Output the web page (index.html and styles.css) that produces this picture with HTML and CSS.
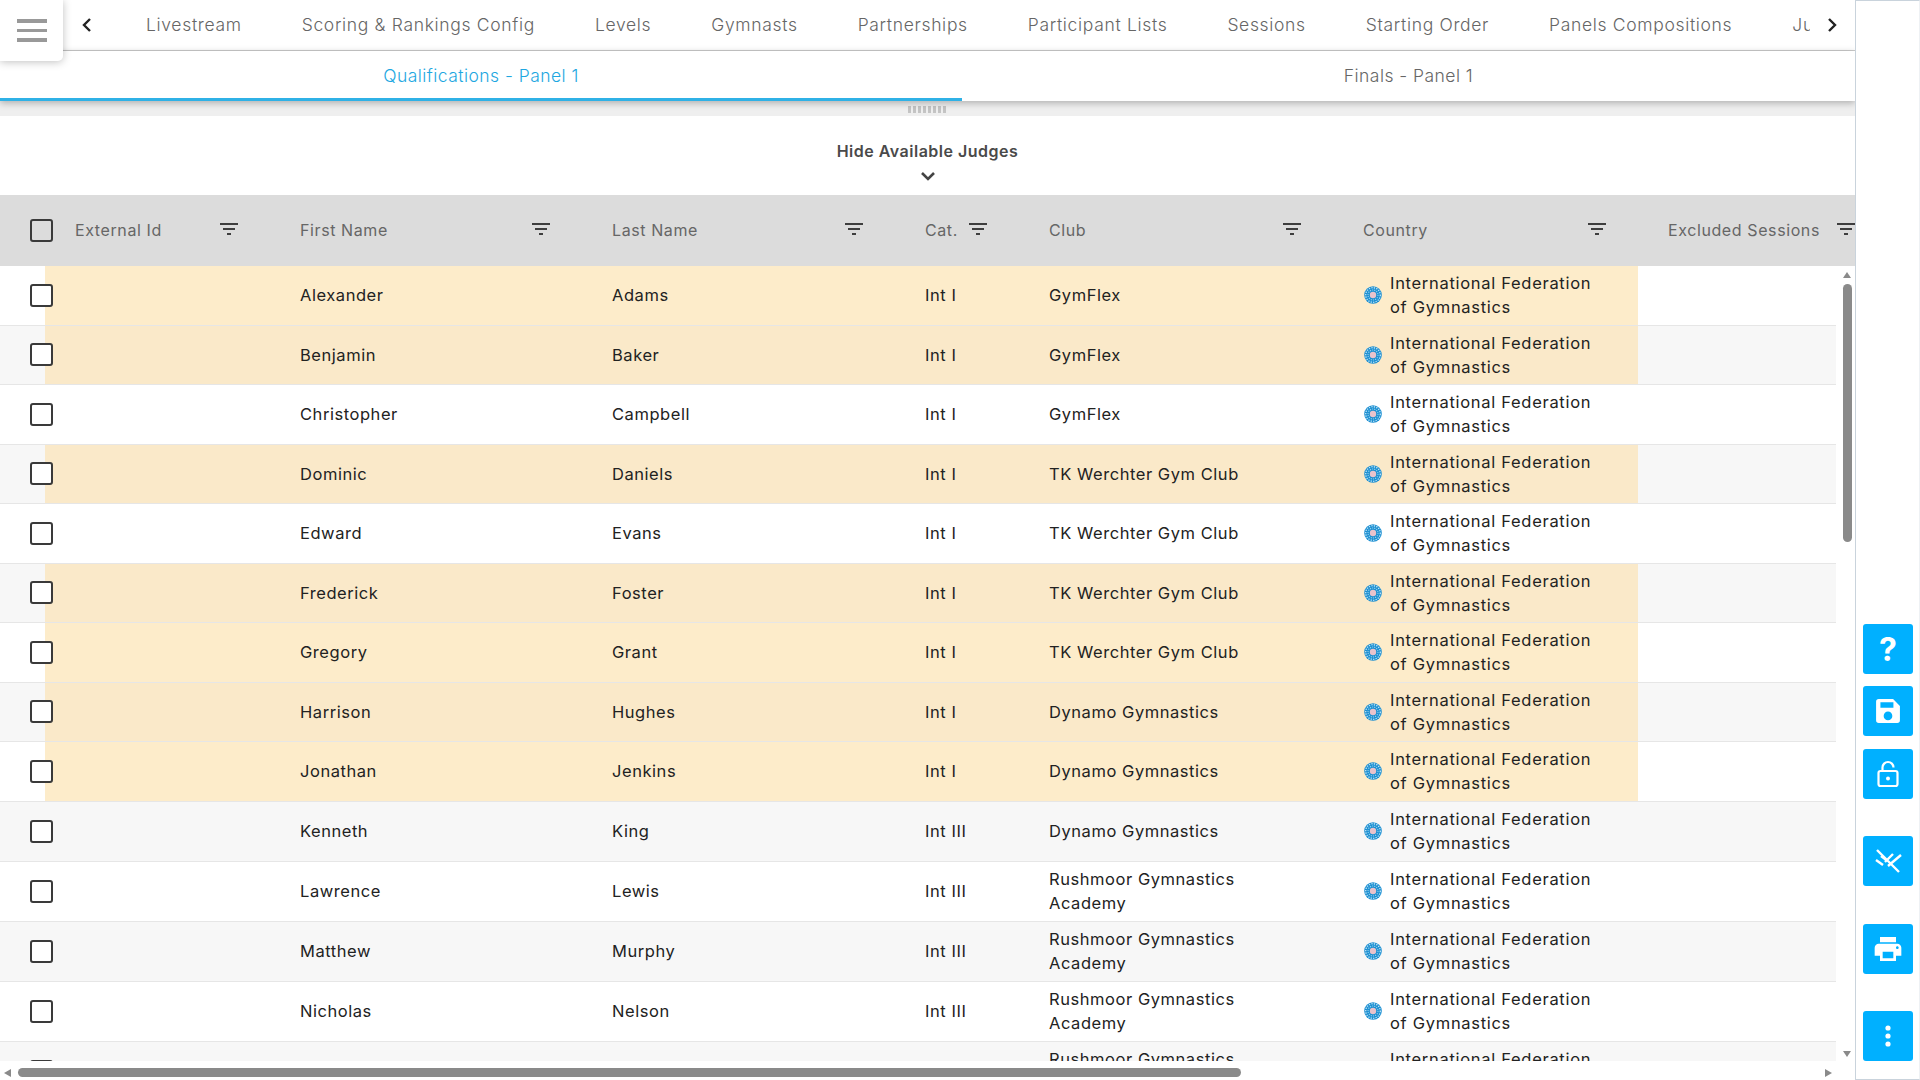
FILE: index.html
```html
<!DOCTYPE html>
<html lang="en">
<head>
<meta charset="utf-8">
<title>Panels Compositions</title>
<link rel="stylesheet" href="styles.css">
</head>
<body>
<svg class="defs" width="0" height="0" aria-hidden="true">
  <symbol id="filter" viewBox="0 0 24 24"><path d="M10 18h4v-2h-4v2zM3 6v2h18V6H3zm3 7h12v-2H6v2z"/></symbol>
  <symbol id="globe" viewBox="0 0 18 18">
    <circle cx="9" cy="9" r="8.800" fill="#1c8fd1"/>
    <circle cx="9" cy="9" r="7.300" fill="none" stroke="#bfe4f7" stroke-width="1.300" stroke-dasharray="1.300 1.200"/>
    <circle cx="9" cy="9" r="5" fill="none" stroke="#8fd0f0" stroke-width="1.100" stroke-dasharray="1.200 1"/>
    <circle cx="9" cy="9" r="3.200" fill="#e9c3cc"/>
  </symbol>
</svg>
<div class="page">
  <main class="main">
    <button class="burger" aria-label="Menu"><span></span><span></span><span></span></button>
    <nav class="tabs">
      <svg class="chev" viewBox="0 0 14 16" width="14" height="16"><path d="M10 2 4 8l6 6" fill="none" stroke="#222" stroke-width="2.400"/></svg>
      <div class="tab-scroll">
        <a>Livestream</a><a>Scoring &amp; Rankings Config</a><a>Levels</a><a>Gymnasts</a><a>Partnerships</a><a>Participant Lists</a><a>Sessions</a><a>Starting Order</a><a>Panels Compositions</a><a>Judges</a>
      </div>
      <svg class="chev" viewBox="0 0 14 16" width="14" height="16"><path d="m4 2 6 6-6 6" fill="none" stroke="#222" stroke-width="2.400"/></svg>
    </nav>
    <div class="subtabs">
      <div class="subtab active">Qualifications - Panel 1</div>
      <div class="subtab">Finals - Panel 1</div>
    </div>
    <div class="splitter"><i class="grip"></i></div>
    <div class="toggle">
      <span>Hide Available Judges</span>
      <svg viewBox="0 0 16 10" width="16" height="10"><path d="m2 2 6 6 6-6" fill="none" stroke="#444" stroke-width="2.600"/></svg>
    </div>
    <div class="thead">
      <div class="th-check"><span class="box head-box"></span></div>
      <div class="th"><span>External Id</span><svg class="fi"><use href="#filter"/></svg></div>
      <div class="th"><span>First Name</span><svg class="fi"><use href="#filter"/></svg></div>
      <div class="th"><span>Last Name</span><svg class="fi"><use href="#filter"/></svg></div>
      <div class="th"><span>Cat.</span><svg class="fi"><use href="#filter"/></svg></div>
      <div class="th"><span>Club</span><svg class="fi"><use href="#filter"/></svg></div>
      <div class="th"><span>Country</span><svg class="fi"><use href="#filter"/></svg></div>
      <div class="th th-last"><span>Excluded Sessions</span><svg class="fi"><use href="#filter"/></svg></div>
    </div>
    <div class="tbody">
      <div class="rows">
        <div class="row hl"><div class="check"><span class="box"></span></div><div class="fields"><div></div><div>Alexander</div><div>Adams</div><div>Int I</div><div class="club">GymFlex</div><div class="country"><svg class="globe"><use href="#globe"/></svg><span>International Federation of Gymnastics</span></div></div></div>
        <div class="row alt hl"><div class="check"><span class="box"></span></div><div class="fields"><div></div><div>Benjamin</div><div>Baker</div><div>Int I</div><div class="club">GymFlex</div><div class="country"><svg class="globe"><use href="#globe"/></svg><span>International Federation of Gymnastics</span></div></div></div>
        <div class="row"><div class="check"><span class="box"></span></div><div class="fields"><div></div><div>Christopher</div><div>Campbell</div><div>Int I</div><div class="club">GymFlex</div><div class="country"><svg class="globe"><use href="#globe"/></svg><span>International Federation of Gymnastics</span></div></div></div>
        <div class="row alt hl"><div class="check"><span class="box"></span></div><div class="fields"><div></div><div>Dominic</div><div>Daniels</div><div>Int I</div><div class="club">TK Werchter Gym Club</div><div class="country"><svg class="globe"><use href="#globe"/></svg><span>International Federation of Gymnastics</span></div></div></div>
        <div class="row"><div class="check"><span class="box"></span></div><div class="fields"><div></div><div>Edward</div><div>Evans</div><div>Int I</div><div class="club">TK Werchter Gym Club</div><div class="country"><svg class="globe"><use href="#globe"/></svg><span>International Federation of Gymnastics</span></div></div></div>
        <div class="row alt hl"><div class="check"><span class="box"></span></div><div class="fields"><div></div><div>Frederick</div><div>Foster</div><div>Int I</div><div class="club">TK Werchter Gym Club</div><div class="country"><svg class="globe"><use href="#globe"/></svg><span>International Federation of Gymnastics</span></div></div></div>
        <div class="row hl"><div class="check"><span class="box"></span></div><div class="fields"><div></div><div>Gregory</div><div>Grant</div><div>Int I</div><div class="club">TK Werchter Gym Club</div><div class="country"><svg class="globe"><use href="#globe"/></svg><span>International Federation of Gymnastics</span></div></div></div>
        <div class="row alt hl"><div class="check"><span class="box"></span></div><div class="fields"><div></div><div>Harrison</div><div>Hughes</div><div>Int I</div><div class="club">Dynamo Gymnastics</div><div class="country"><svg class="globe"><use href="#globe"/></svg><span>International Federation of Gymnastics</span></div></div></div>
        <div class="row hl"><div class="check"><span class="box"></span></div><div class="fields"><div></div><div>Jonathan</div><div>Jenkins</div><div>Int I</div><div class="club">Dynamo Gymnastics</div><div class="country"><svg class="globe"><use href="#globe"/></svg><span>International Federation of Gymnastics</span></div></div></div>
        <div class="row alt tall"><div class="check"><span class="box"></span></div><div class="fields"><div></div><div>Kenneth</div><div>King</div><div>Int III</div><div class="club">Dynamo Gymnastics</div><div class="country"><svg class="globe"><use href="#globe"/></svg><span>International Federation of Gymnastics</span></div></div></div>
        <div class="row tall"><div class="check"><span class="box"></span></div><div class="fields"><div></div><div>Lawrence</div><div>Lewis</div><div>Int III</div><div class="club">Rushmoor Gymnastics Academy</div><div class="country"><svg class="globe"><use href="#globe"/></svg><span>International Federation of Gymnastics</span></div></div></div>
        <div class="row alt tall"><div class="check"><span class="box"></span></div><div class="fields"><div></div><div>Matthew</div><div>Murphy</div><div>Int III</div><div class="club">Rushmoor Gymnastics Academy</div><div class="country"><svg class="globe"><use href="#globe"/></svg><span>International Federation of Gymnastics</span></div></div></div>
        <div class="row tall"><div class="check"><span class="box"></span></div><div class="fields"><div></div><div>Nicholas</div><div>Nelson</div><div>Int III</div><div class="club">Rushmoor Gymnastics Academy</div><div class="country"><svg class="globe"><use href="#globe"/></svg><span>International Federation of Gymnastics</span></div></div></div>
        <div class="row alt tall"><div class="check"><span class="box"></span></div><div class="fields"><div></div><div></div><div></div><div></div><div class="club">Rushmoor Gymnastics Academy</div><div class="country"><svg class="globe"><use href="#globe"/></svg><span>International Federation of Gymnastics</span></div></div></div>
      </div>
      <div class="vscroll"><i class="arrow up"></i><i class="vthumb"></i><i class="arrow down"></i></div>
    </div>
    <div class="hscroll"><i class="arrow left"></i><i class="hthumb"></i><i class="arrow right"></i></div>
  </main>
  <aside class="side">
    <button class="action"><span class="qmark">?</span></button>
    <button class="action near"><svg viewBox="0 0 24 24" width="26" height="26"><path fill="#fff" fill-rule="evenodd" d="M3.500 1h13.200L23 7.300V20.500A2.500 2.500 0 0 1 20.500 23h-17A2.500 2.500 0 0 1 1 20.500v-17A2.500 2.500 0 0 1 3.500 1zM5 4v5h12V4H5zm7 8.500a4 4 0 1 0 0 8 4 4 0 0 0 0-8z"/></svg></button>
    <button class="action near"><svg viewBox="0 0 24 28" width="24" height="28" fill="none" stroke="#fff" stroke-width="2.200"><rect x="2.500" y="11" width="19" height="15" rx="2"/><path d="M6.500 11V7.500a5.500 5.500 0 0 1 11 0"/><circle cx="12" cy="18.500" r="2" fill="#fff" stroke="none"/></svg></button>
    <button class="action far"><svg viewBox="0 0 30 28" width="30" height="28" fill="none" stroke="#fff" stroke-width="2.400"><path d="m3 13 7 5M8 9l6 4.500M15 19l13-11M12 15l8-8M4 3l22 22"/></svg></button>
    <button class="action far"><svg viewBox="0 0 24 24" width="32" height="32"><path fill="#fff" d="M19 8H5c-1.660 0-3 1.340-3 3v6h4v4h12v-4h4v-6c0-1.660-1.340-3-3-3zm-3 11H8v-5h8v5zm3-7c-.55 0-1-.45-1-1s.45-1 1-1 1 .45 1 1-.45 1-1 1zm-1-9H6v4h12V3z"/></svg></button>
    <button class="action far"><svg viewBox="0 0 8 24" width="8" height="24"><circle cx="4" cy="4" r="2.600" fill="#fff"/><circle cx="4" cy="12" r="2.600" fill="#fff"/><circle cx="4" cy="20" r="2.600" fill="#fff"/></svg></button>
  </aside>
</div>
</body>
</html>
```

FILE: styles.css
```css
* { box-sizing: border-box; }
html, body { margin: 0; height: 100%; }
body { font-family: Inter, "Open Sans", "Liberation Sans", sans-serif; color: #222; background: #fff; overflow: hidden; }
.defs { position: absolute; }
button { border: 0; padding: 0; font: inherit; cursor: pointer; }

.page { display: flex; width: 1920px; height: 1080px; }
.main { position: relative; width: 1855px; display: flex; flex-direction: column; overflow: hidden; }

.burger { position: absolute; z-index: 5; left: 0; top: 0; width: 63px; height: 61px; background: #fff; border-radius: 0 0 5px 0; box-shadow: 0 1px 8px rgba(0,0,0,.25); display: flex; flex-direction: column; gap: 6px; align-items: center; justify-content: center; }
.burger span { width: 30px; height: 3.500px; background: #999; }

.tabs { height: 51px; flex: none; display: flex; align-items: center; padding: 0 16px 0 80px; border-bottom: 1px solid #ccc; }
.chev { flex: none; }
.tab-scroll { flex: 1; min-width: 0; margin-right: 15px; display: flex; gap: 60px; padding: 0 0 2px 52px; overflow: hidden; white-space: nowrap; font-size: 17.500px; font-weight: 300; color: #666; letter-spacing: .67px; }
.tab-scroll a { flex: none; }

.subtabs { position: relative; z-index: 2; height: 50px; flex: none; display: flex; background: #fff; box-shadow: 0 2px 7px rgba(0,0,0,.28); }
.subtab { display: flex; align-items: center; justify-content: center; width: 893px; font-size: 17.500px; font-weight: 300; color: #666; letter-spacing: .45px; padding: 1px 0 2px; }
.subtab.active { width: 962px; color: #1ea7e1; border-bottom: 3px solid #2fb1e6; padding: 1px 0 0; }

.splitter { height: 15px; flex: none; background: #efefef; display: flex; justify-content: center; padding-top: 5px; }
.grip { display: block; width: 40px; height: 7px; background: repeating-linear-gradient(90deg, #c4c4c4 0 3px, transparent 3px 5px); }

.toggle { height: 79px; flex: none; display: flex; flex-direction: column; align-items: center; padding-top: 25px; gap: 10px; font-size: 16px; font-weight: 600; color: #4a4a4a; letter-spacing: .5px; }
.toggle svg { display: block; }

.thead { height: 71px; flex: none; background: #dcdcdc; display: grid; grid-template-columns: 75px 225px 312px 313px 124px 314px 305px 187px; font-size: 16px; letter-spacing: .6px; color: #666; }
.th-check { display: flex; align-items: center; padding-left: 30px; }
.th { display: flex; align-items: center; justify-content: space-between; padding: 0 59px 1px 0; white-space: nowrap; }
.th-last { padding-right: 0; margin-right: -3px; }
.fi { width: 24px; height: 24px; fill: #3e3e3e; flex: none; margin-top: -2px; }

.box { display: block; flex: none; width: 23px; height: 23px; border: 2.600px solid #3a3a3a; border-radius: 3px; background: #fff; }
.head-box { background: transparent; }

.tbody { flex: 1; min-height: 0; display: flex; overflow: hidden; }
.rows { width: 1836px; flex: none; }
.row { height: 59.500px; display: flex; background: #fff; border-bottom: 1px solid #e6e6e6; font-size: 16.500px; letter-spacing: .55px; line-height: 24px; }
.row.tall { height: 60px; }
.row.alt { background: #f7f7f7; }
.check { position: relative; z-index: 1; width: 45px; flex: none; display: flex; align-items: center; padding-left: 30px; }
.fields { width: 1593px; flex: none; display: grid; grid-template-columns: 255px 312px 313px 124px 314px 275px; align-items: center; }
.row.hl .fields { background: #fdecca; }
.row.alt.hl .fields { background: #fae9c9; }
.club { max-width: 205px; }
.country { display: flex; align-items: center; gap: 8px; padding-left: 1px; letter-spacing: .7px; }
.country span { width: 212px; }
.globe { width: 18px; height: 18px; flex: none; }

.vscroll { flex: 1; display: flex; flex-direction: column; align-items: center; padding: 6px 0 4px 3px; }
.vthumb { display: block; width: 9px; height: 258px; margin-top: 6px; border-radius: 5px; background: #8a8a8a; }
.arrow { display: block; width: 0; height: 0; border: 0 solid transparent; }
.arrow.up { border-width: 0 4.500px 6px; border-bottom-color: #8a8a8a; }
.arrow.down { border-width: 6px 4.500px 0; border-top-color: #8a8a8a; margin-top: auto; }
.arrow.left { border-width: 4.500px 7px 4.500px 0; border-right-color: #8a8a8a; }
.arrow.right { border-width: 4.500px 0 4.500px 7px; border-left-color: #8a8a8a; margin-left: 584px; }

.hscroll { height: 19px; flex: none; display: flex; align-items: center; padding: 4px 0 0 4px; }
.hthumb { display: block; width: 1223px; height: 9px; margin-left: 7px; border-radius: 5px; background: #8a8a8a; }

.side { width: 65px; flex: none; display: flex; flex-direction: column; justify-content: flex-end; align-items: flex-start; padding: 0 0 18px 7px; border: 1px solid #c9d3dc; border-right-color: #eef1f4; }
.action { width: 50px; height: 50px; flex: none; background: #00b0ff; border-radius: 3px; display: flex; align-items: center; justify-content: center; color: #fff; }
.action.near { margin-top: 12.500px; }
.action.far { margin-top: 37.500px; }
.qmark { font-size: 32px; font-weight: 700; line-height: 1; padding-top: 3px; }
```
